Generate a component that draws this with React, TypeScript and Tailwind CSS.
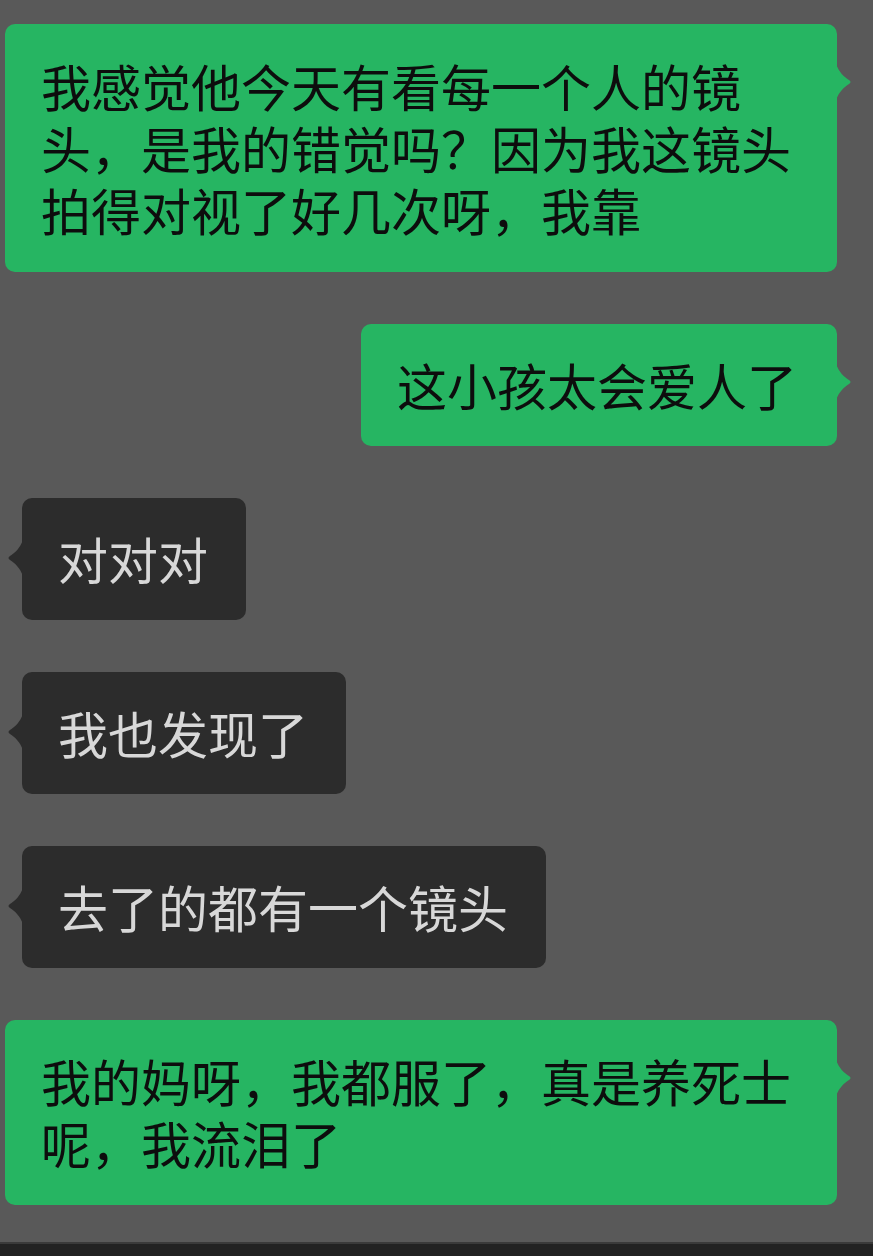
import React from "react";

const FONT = '"Noto Sans CJK SC", "Noto Sans", sans-serif';

function RightTail() {
  return (
    <svg
      className="absolute right-[-16px] top-[40px]"
      width="17"
      height="36"
      viewBox="0 0 17 36"
    >
      <path
        d="M0 0 C3 8 8 13 13 16 Q16 18 13 20 C8 23 3 28 0 36 Z"
        fill="#26b562"
      />
    </svg>
  );
}

function LeftTail() {
  return (
    <svg
      className="absolute left-[-16px] top-[42px]"
      width="17"
      height="36"
      viewBox="0 0 17 36"
    >
      <path
        d="M17 0 C14 8 9 13 4 16 Q1 18 4 20 C9 23 14 28 17 36 Z"
        fill="#2c2c2c"
      />
    </svg>
  );
}

function Sent({ text, pad }: { text: string; pad: string }) {
  return (
    <div
      className={
        "self-end mr-[36px] relative w-max max-w-[832px] rounded-[10px] bg-[#26b562] pl-[36px] pr-[40px] text-[50px] leading-[62px] text-[#0d0d0d] " +
        pad
      }
    >
      {text}
      <RightTail />
    </div>
  );
}

function Received({ text }: { text: string }) {
  return (
    <div className="self-start ml-[22px] relative w-max max-w-[700px] rounded-[10px] bg-[#2c2c2c] pl-[36px] pr-[38px] pt-[29px] pb-[31px] text-[50px] leading-[62px] text-[#d8d8d8]">
      {text}
      <LeftTail />
    </div>
  );
}

export default function App() {
  return (
    <div
      className="w-[873px] h-[1256px] bg-[#595959] flex flex-col overflow-hidden"
      style={{ fontFamily: FONT }}
    >
      <div className="flex-1 flex flex-col gap-[52px] pt-[24px]">
        <Sent
          pad="pt-[30px] pb-[32px]"
          text="我感觉他今天有看每一个人的镜头，是我的错觉吗？因为我这镜头拍得对视了好几次呀，我靠"
        />
        <Sent pad="pt-[29px] pb-[31px]" text="这小孩太会爱人了" />
        <Received text="对对对" />
        <Received text="我也发现了" />
        <Received text="去了的都有一个镜头" />
        <Sent
          pad="pt-[29px] pb-[32px]"
          text="我的妈呀，我都服了，真是养死士呢，我流泪了"
        />
      </div>
      <div className="h-[14px] bg-[#222222] border-t-2 border-[#3a3a3a]" />
    </div>
  );
}
